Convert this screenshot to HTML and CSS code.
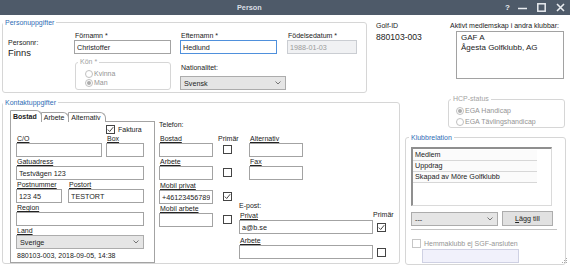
FILE: index.html
```html
<!DOCTYPE html>
<html lang="sv">
<head>
    <meta charset="utf-8">
    <title>Person</title>
    <link rel="stylesheet" href="styles.css">
</head>
<body>
<div class="window">
    <div class="titlebar">
        <span class="title">Person</span>
        <div class="win-buttons">
            <span class="help">?</span>
            <svg class="wb" width="9" height="9" viewBox="0 0 9 9"><path d="M0 5.5h9" stroke="#e9ecf0" stroke-width="1.5"/></svg>
            <svg class="wb" width="9" height="9" viewBox="0 0 9 9"><rect x="0.8" y="0.8" width="7.4" height="7.4" fill="none" stroke="#e9ecf0" stroke-width="1.5"/></svg>
            <svg class="wb wb-close" width="9" height="9" viewBox="0 0 9 9"><path d="M1 1l7 7M8 1l-7 7" stroke="#e9ecf0" stroke-width="1.6"/></svg>
        </div>
    </div>

    <div class="content">
        <!-- top row -->
        <div class="row-top">
            <fieldset class="group group-person">
                <legend>Personuppgifter</legend>
                <div class="person-body">
                    <div class="col-pnr">
                        <div class="plain">Personnr:</div>
                        <div class="pnr-value">Finns</div>
                    </div>
                    <div class="col">
                        <label class="lbl">Förnamn *</label>
                        <input class="inp w97" type="text" value="Christoffer">
                        <fieldset class="group group-kon">
                            <legend>Kön *</legend>
                            <div class="kon-body">
                                <div class="radio"><span class="dot"></span>Kvinna</div>
                                <div class="radio"><span class="dot on"></span>Man</div>
                            </div>
                        </fieldset>
                    </div>
                    <div class="col">
                        <label class="lbl">Efternamn *</label>
                        <input class="inp w97 focused" type="text" value="Hedlund">
                        <label class="lbl nat-label">Nationalitet:</label>
                        <div class="select w106">
                            <span>Svensk</span>
                            <svg width="6" height="4" viewBox="0 0 6 4"><path d="M0.5 0.5L3 3L5.5 0.5" fill="none" stroke="#666" stroke-width="0.9"/></svg>
                        </div>
                    </div>
                    <div class="col">
                        <label class="lbl">Födelsedatum *</label>
                        <input class="inp w70 disabled" type="text" value="1988-01-03" disabled>
                    </div>
                </div>
            </fieldset>

            <div class="golf-id">
                <div class="plain">Golf-ID</div>
                <div class="golf-value">880103-003</div>
            </div>

            <div class="other-clubs">
                <div class="plain">Aktivt medlemskap i andra klubbar:</div>
                <div class="clubs-box">
                    <div>GAF A</div>
                    <div>Ågesta Golfklubb, AG</div>
                </div>
            </div>
        </div>

        <!-- bottom row -->
        <div class="row-bottom">
            <fieldset class="group group-contact">
                <legend>Kontaktuppgifter</legend>
                <div class="contact-body">
                    <div class="tabs-wrap">
                        <div class="tabs">
                            <span class="tab active">Bostad</span>
                            <span class="tab">Arbete</span>
                            <span class="tab">Alternativ</span>
                        </div>
                        <div class="tab-panel">
                            <div class="faktura">
                                <span class="check"><svg width="7" height="7" viewBox="0 0 7 7"><path d="M0.8 3.6L2.7 5.5L6.2 1.2" fill="none" stroke="#333" stroke-width="0.9"/></svg></span>
                                <span>Faktura</span>
                            </div>
                            <div class="pair co-row">
                                <div class="field"><label class="lbl u">C/O</label><input class="inp" type="text"></div>
                                <div class="field"><label class="lbl u">Box</label><input class="inp" type="text"></div>
                            </div>
                            <div class="field"><label class="lbl u">Gatuadress</label><input class="inp" type="text" value="Testvägen 123"></div>
                            <div class="pair post-row">
                                <div class="field"><label class="lbl u">Postnummer</label><input class="inp" type="text" value="123 45"></div>
                                <div class="field"><label class="lbl u">Postort</label><input class="inp" type="text" value="TESTORT"></div>
                            </div>
                            <div class="field"><label class="lbl u">Region</label><input class="inp" type="text"></div>
                            <div class="field">
                                <label class="lbl u">Land</label>
                                <div class="select">
                                    <span>Sverige</span>
                                    <svg width="6" height="4" viewBox="0 0 6 4"><path d="M0.5 0.5L3 3L5.5 0.5" fill="none" stroke="#666" stroke-width="0.9"/></svg>
                                </div>
                            </div>
                            <div class="footer-note">880103-003, 2018-09-05, 14:38</div>
                        </div>
                    </div>

                    <div class="phones">
                        <div class="plain">Telefon:</div>
                        <div class="phone-grid">
                            <div class="field"><label class="lbl u">Bostad</label><input class="inp" type="text"></div>
                            <div class="prim"><span class="lbl">Primär</span><span class="check"></span></div>
                            <div class="field"><label class="lbl u">Alternativ</label><input class="inp" type="text"></div>
                            <div class="field"><label class="lbl u">Arbete</label><input class="inp" type="text"></div>
                            <div class="prim"><span class="lbl"></span><span class="check"></span></div>
                            <div class="field"><label class="lbl u">Fax</label><input class="inp" type="text"></div>
                        </div>
                        <div class="phone-lower">
                            <div class="mobile-grid">
                                <div class="field"><label class="lbl u">Mobil privat</label><input class="inp" type="text" value="+46123456789"></div>
                                <div class="prim"><span class="lbl"></span><span class="check"><svg width="7" height="7" viewBox="0 0 7 7"><path d="M0.8 3.6L2.7 5.5L6.2 1.2" fill="none" stroke="#333" stroke-width="0.9"/></svg></span></div>
                                <div class="field"><label class="lbl u">Mobil arbete</label><input class="inp" type="text"></div>
                                <div class="prim"><span class="lbl"></span><span class="check"></span></div>
                            </div>
                            <div class="email">
                                <div class="plain">E-post:</div>
                                <div class="email-grid">
                                    <div class="field"><label class="lbl u">Privat</label><input class="inp" type="text" value="a@b.se"></div>
                                    <div class="prim email-prim"><span class="lbl">Primär</span><span class="check"><svg width="7" height="7" viewBox="0 0 7 7"><path d="M0.8 3.6L2.7 5.5L6.2 1.2" fill="none" stroke="#333" stroke-width="0.9"/></svg></span></div>
                                    <div class="field"><label class="lbl u">Arbete</label><input class="inp" type="text"></div>
                                    <div class="prim email-prim"><span class="lbl"></span><span class="check"></span></div>
                                </div>
                            </div>
                        </div>
                    </div>
                </div>
            </fieldset>

            <div class="side">
                <fieldset class="group group-hcp">
                    <legend>HCP-status</legend>
                    <div class="hcp-body">
                        <div class="radio"><span class="dot on"></span>EGA Handicap</div>
                        <div class="radio"><span class="dot"></span>EGA Tävlingshandicap</div>
                    </div>
                </fieldset>

                <fieldset class="group group-club">
                    <legend>Klubbrelation</legend>
                    <div class="club-body">
                        <div class="club-list">
                            <div class="club-item">Medlem</div>
                            <div class="club-item">Uppdrag</div>
                            <div class="club-item">Skapad av Möre Golfklubb</div>
                        </div>
                        <div class="club-actions">
                            <div class="select w87">
                                <span>---</span>
                                <svg width="6" height="4" viewBox="0 0 6 4"><path d="M0.5 0.5L3 3L5.5 0.5" fill="none" stroke="#666" stroke-width="0.9"/></svg>
                            </div>
                            <button class="btn" type="button"><u>L</u>ägg till</button>
                        </div>
                        <div class="separator"></div>
                        <div class="home-club">
                            <span class="check off"></span>
                            <span>Hemmaklubb ej SGF-ansluten</span>
                        </div>
                        <input class="inp home-input" type="text" disabled>
                    </div>
                </fieldset>
            </div>
        </div>
    </div>

    <svg class="grip" width="7" height="7" viewBox="0 0 7 7">
        <rect x="5" y="1" width="1" height="1" fill="#a9a9a9"/>
        <rect x="3" y="3" width="1" height="1" fill="#a9a9a9"/>
        <rect x="5" y="3" width="1" height="1" fill="#a9a9a9"/>
        <rect x="1" y="5" width="1" height="1" fill="#a9a9a9"/>
        <rect x="3" y="5" width="1" height="1" fill="#a9a9a9"/>
        <rect x="5" y="5" width="1" height="1" fill="#a9a9a9"/>
    </svg>
</div>
</body>
</html>
```

FILE: styles.css
```css
* {
    box-sizing: border-box;
}

body {
    margin: 0;
    font-family: "Liberation Sans", Arial, sans-serif;
    font-size: 7px;
    color: #222;
    background: #fff;
}

.window {
    position: relative;
    width: 570px;
    height: 266px;
    overflow: hidden;
    background: #fff;
}

/* title bar */
.titlebar {
    display: flex;
    align-items: center;
    height: 15px;
    background: #4e5a69;
    color: #d9dee5;
}

.title {
    margin-left: 237px;
    font-size: 7.3px;
    font-weight: bold;
}

.win-buttons {
    display: flex;
    align-items: center;
    margin-left: auto;
    margin-right: 5px;
}

.help {
    font-size: 8px;
    font-weight: bold;
    color: #e9ecf0;
    margin-right: 8px;
}

.wb {
    display: block;
    margin-right: 10px;
}

.wb-close {
    margin-right: 0;
}

/* group boxes */
fieldset.group {
    margin: 0;
    padding: 0;
    min-width: 0;
    border: 1px solid #d6d6d6;
    border-radius: 3px;
}

fieldset.group > legend {
    padding: 0 2px;
    font-size: 7px;
    line-height: 9px;
    color: #2f6db5;
}

.content {
    padding-left: 2px;
}

.row-top {
    display: flex;
    align-items: flex-start;
    height: 78px;
}

.row-bottom {
    display: flex;
    align-items: flex-start;
}

/* Personuppgifter */
.group-person {
    width: 365px;
    margin-top: 3px !important;
}

.person-body {
    display: grid;
    grid-template-columns: 66px 106px 107px 70px;
    align-items: start;
    padding: 5px 0 2px 5px;
}

.col {
    display: flex;
    flex-direction: column;
    align-items: flex-start;
}

.plain {
    line-height: 8px;
    white-space: nowrap;
}

.col-pnr .plain {
    margin-top: 7px;
}

.pnr-value {
    margin-top: 1px;
    font-size: 9.4px;
    line-height: 10px;
}

.lbl {
    display: block;
    height: 8px;
    line-height: 8px;
    padding-left: 1px;
    white-space: nowrap;
}

.u {
    text-decoration: underline;
    text-underline-offset: 1px;
}

.inp {
    display: block;
    width: 100%;
    height: 14px;
    margin: 0;
    padding: 0 2px;
    border: 1px solid #a3a3a3;
    border-radius: 0;
    background: #fff;
    font-family: inherit;
    font-size: 7.2px;
    color: #222;
    outline: none;
}

.w97 { width: 97px; }
.w70 { width: 70px; }
.w106 { width: 106px; }
.w87 { width: 87px; }

.inp.focused {
    border-color: #4f90dc;
}

.inp.disabled,
.inp:disabled {
    background: #f0f1f3;
    border-color: #cacdd2;
    color: #9a9a9a;
}

.nat-label {
    margin-top: 10px;
}

.select {
    display: flex;
    align-items: center;
    justify-content: space-between;
    height: 14px;
    margin-top: 0;
    padding: 0 4px 0 3px;
    border: 1px solid #acacac;
    background: #e5e5e5;
    font-size: 7.2px;
}

.nat-label + .select {
    margin-top: 4px;
}

/* Kön */
.group-kon {
    width: 96px;
    margin: 4px 0 0 1px !important;
}

.group-kon > legend,
.group-hcp > legend {
    color: #a3a3a3 !important;
    line-height: 8px !important;
    margin-left: 2px;
}

.kon-body {
    padding: 3px 0 2px 9px;
}

.radio {
    display: flex;
    align-items: center;
    height: 9px;
    color: #949494;
    white-space: nowrap;
}

.dot {
    display: flex;
    align-items: center;
    justify-content: center;
    width: 8px;
    height: 8px;
    margin-right: 1px;
    border: 1px solid #c0c0c0;
    border-radius: 50%;
    background: #fff;
}

.dot.on::after {
    content: "";
    width: 4px;
    height: 4px;
    border-radius: 50%;
    background: #acacac;
}

/* Golf-ID and other clubs */
.golf-id {
    width: 74px;
    margin: 7px 0 0 9px;
}

.golf-value {
    margin-top: 2px;
    font-size: 8.6px;
    line-height: 10px;
}

.other-clubs {
    margin-top: 7px;
}

.clubs-box {
    width: 108px;
    height: 48px;
    margin: 1px 0 0 6px;
    padding: 1px 4px;
    border: 1px solid #a2a2a2;
    font-size: 8px;
    line-height: 10px;
}

/* Kontaktuppgifter */
.group-contact {
    width: 398px;
    margin-top: 5px !important;
}

.contact-body {
    display: flex;
    align-items: flex-start;
    padding: 3px 0 0 7px;
}

.tabs-wrap {
    width: 145px;
}

.tabs {
    display: flex;
    align-items: flex-end;
    height: 12px;
}

.tab {
    height: 10px;
    margin-right: -1px;
    padding: 0 4px 0 2px;
    border: 1px solid #a3a3a3;
    border-bottom: none;
    border-radius: 1px 6px 0 0;
    background: #fff;
    line-height: 9px;
    white-space: nowrap;
}

.tab.active {
    position: relative;
    z-index: 1;
    height: 12px;
    padding-top: 1px;
    font-weight: bold;
}

.tab-panel {
    display: flex;
    flex-direction: column;
    gap: 1px;
    margin-top: -1px;
    padding: 0 10px 2px 5px;
    border: 1px solid #a3a3a3;
}

.faktura {
    display: flex;
    align-items: center;
    gap: 3px;
    height: 10px;
    margin: 2px 0 0 90px;
}

.check {
    display: inline-flex;
    align-items: center;
    justify-content: center;
    flex-shrink: 0;
    width: 9px;
    height: 9px;
    border: 1px solid #444;
    background: #fff;
}

.check.off {
    border-color: #c6c6c6;
}

.pair {
    display: grid;
    gap: 4px;
}

.co-row {
    grid-template-columns: 86px 38px;
}

.post-row {
    grid-template-columns: 46px 76px;
    gap: 6px;
}

.field {
    display: flex;
    flex-direction: column;
}

.footer-note {
    margin-top: 2px;
    padding-left: 1px;
    line-height: 8px;
}

/* phones */
.phones {
    width: 236px;
    margin-left: 4px;
    padding-top: 11px;
}

.phone-grid {
    display: grid;
    grid-template-columns: 54px 26px 54px;
    column-gap: 5px;
    row-gap: 1px;
    margin-top: 6px;
}

.phone-grid .field,
.mobile-grid .field {
    width: 54px;
}

.phone-grid .field:nth-child(3n+1) {
    margin-right: 0;
}

.prim {
    display: flex;
    flex-direction: column;
    align-items: flex-start;
}

.prim .lbl {
    padding-left: 0;
}

.prim .check {
    margin: 2px 0 0 5px;
}

.phone-lower {
    display: flex;
    align-items: flex-start;
    margin-top: 2px;
}

.mobile-grid {
    display: grid;
    grid-template-columns: 59px 21px;
    row-gap: 1px;
    width: 80px;
}

.email {
    margin-top: 20px;
}

.email-grid {
    display: grid;
    grid-template-columns: 134px 20px;
    row-gap: 3px;
    margin-top: 2px;
}

.email-prim .lbl {
    margin-top: -1px;
}

.email-prim .check {
    margin: 4px 0 0 4px;
}

/* right side */
.side {
    width: 161px;
    margin-left: 5px;
}

.group-hcp {
    width: 117px;
    margin: 2px 0 0 43px !important;
}

.hcp-body {
    padding: 2px 0 0 7px;
}

.hcp-body .radio {
    height: 11px;
}

.group-club {
    width: 161px;
    margin-top: 5px !important;
}

.group-club > legend {
    margin-left: 3px;
}

.club-body {
    padding: 5px 0 1px 5px;
}

.club-list {
    width: 141px;
    height: 59px;
    padding-top: 1px;
    border-top: 2px solid #8f8f8f;
    border-left: 2px solid #8f8f8f;
    border-right: 1px solid #dadada;
    border-bottom: 1px solid #dadada;
}

.club-item {
    width: 124px;
    height: 11px;
    padding-left: 2px;
    border-bottom: 1px solid #d7d7d7;
    background: #fbfbfb;
    font-size: 7.2px;
    line-height: 10px;
}

.club-actions {
    display: flex;
    align-items: flex-end;
    margin-top: 5px;
}

.btn {
    width: 51px;
    height: 15px;
    margin-left: 4px;
    padding: 0;
    border: 1px solid #adadad;
    background: #e1e1e1;
    font-family: inherit;
    font-size: 7.2px;
    color: #222;
}

.separator {
    width: 146px;
    margin-top: 3px;
    border-top: 1px solid #c4c4c4;
}

.home-club {
    display: flex;
    align-items: center;
    gap: 3px;
    height: 9px;
    margin: 9px 0 0 1px;
    color: #959595;
}

.home-input {
    width: 97px;
    margin: 1px 0 0 11px;
    background: #f1f1fb !important;
    border-color: #cfd1e3 !important;
}

.grip {
    position: absolute;
    right: 2px;
    bottom: 2px;
}
```
